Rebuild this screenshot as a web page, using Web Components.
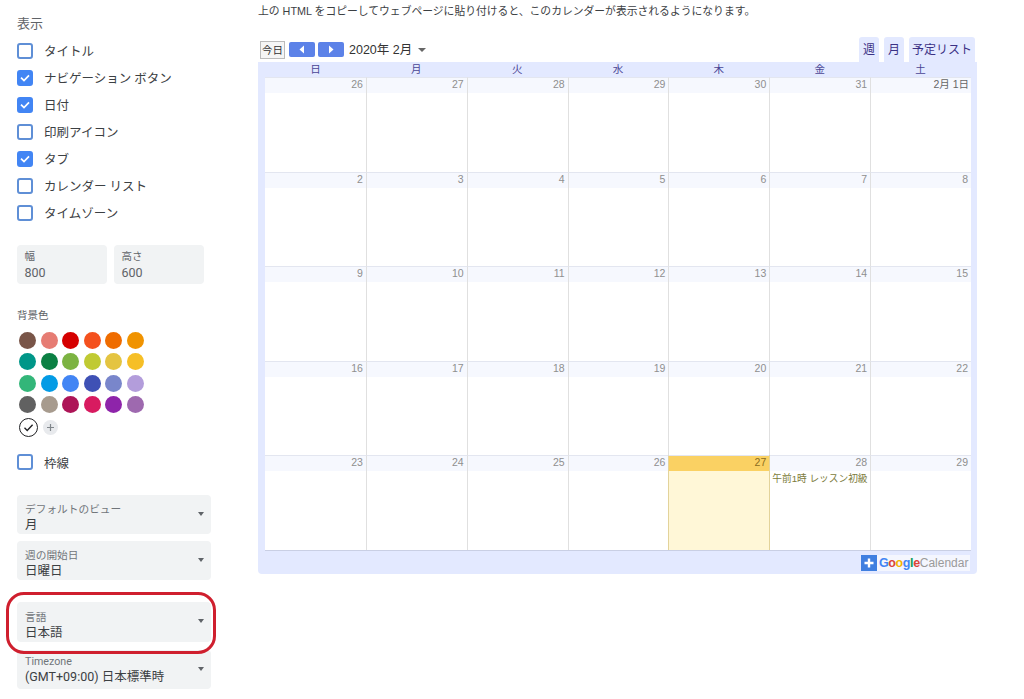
<!DOCTYPE html>
<html lang="ja">
<head>
<meta charset="utf-8">
<title>カレンダーの埋め込み</title>
<style>
  html, body { margin: 0; height: 699px; overflow: hidden; background: #fff; }
  body { font-family: Roboto, "Noto Sans CJK JP", sans-serif; color: #3c4043; }
</style>
</head>
<body>
<embed-page>
  <embed-sidebar slot="side">
    <check-row>タイトル</check-row>
    <check-row checked>ナビゲーション ボタン</check-row>
    <check-row checked>日付</check-row>
    <check-row>印刷アイコン</check-row>
    <check-row checked>タブ</check-row>
    <check-row>カレンダー リスト</check-row>
    <check-row>タイムゾーン</check-row>
    <size-field slot="sizes" label="幅" value="800" style="width:90px"></size-field>
    <size-field slot="sizes" label="高さ" value="600" style="width:90px"></size-field>
    <color-swatches slot="colors"></color-swatches>
    <check-row slot="border">枠線</check-row>
    <select-field slot="selects" label="デフォルトのビュー" value="月"></select-field>
    <select-field slot="selects" label="週の開始日" value="日曜日"></select-field>
    <select-field slot="selects" label="言語" value="日本語" ringed style="margin-top:15px"></select-field>
    <select-field slot="selects" label="Timezone" value="(GMT+09:00) 日本標準時" style="margin-top:1px;padding-top:5px"></select-field>
  </embed-sidebar>
  <cal-preview slot="main"></cal-preview>
</embed-page>

<script>
customElements.define('embed-page', class extends HTMLElement {
  constructor() {
    super();
    this.attachShadow({ mode: 'open' });
    this.shadowRoot.innerHTML = `
      <style>
        :host { display: flex; height: 699px; overflow: hidden; }
        .side { width: 258px; flex: none; }
        .main { flex: none; width: 719px; }
      </style>
      <div class="side"><slot name="side"></slot></div>
      <div class="main"><slot name="main"></slot></div>
    `;
  }
});

customElements.define('embed-sidebar', class extends HTMLElement {
  constructor() {
    super();
    this.attachShadow({ mode: 'open' });
    this.shadowRoot.innerHTML = `
      <style>
        :host { display: block; padding: 15px 0 0 17px; }
        h2 { margin: 0 0 4px; font: 400 13px/18px Roboto, "Noto Sans CJK JP", sans-serif; color: #5f6368; }
        .sizes { display: flex; gap: 7px; margin-top: 19px; }
        .colors { margin-top: 24px; }
        .colors p { margin: 0 0 7.5px; font-size: 10.5px; line-height: 16px; color: #5f6368; }
        .border { margin-top: 12px; }
        .selects { margin-top: 19px; width: 194px; display: flex; flex-direction: column; gap: 7px; }
      </style>
      <h2>表示</h2>
      <slot></slot>
      <div class="sizes"><slot name="sizes"></slot></div>
      <div class="colors"><p>背景色</p><slot name="colors"></slot></div>
      <div class="border"><slot name="border"></slot></div>
      <div class="selects"><slot name="selects"></slot></div>
    `;
  }
});

customElements.define('check-row', class extends HTMLElement {
  constructor() {
    super();
    this.attachShadow({ mode: 'open' });
    const on = this.hasAttribute('checked');
    this.shadowRoot.innerHTML = `
      <style>
        :host { display: flex; align-items: center; height: 27px; font-size: 12.5px; color: #3c4043; }
        .box { width: 16px; height: 16px; box-sizing: border-box; border: 2px solid #5f8fd6; border-radius: 3px; margin-right: 11px; display: flex; align-items: center; justify-content: center; }
        .box.on { background: #4285f4; border-color: #4285f4; }
      </style>
      <span class="box ${on ? 'on' : ''}">${on ? '<svg width="12" height="12" viewBox="0 0 12 12"><path d="M2 5.6 5 8.6 10 3.4" fill="none" stroke="#fff" stroke-width="1.7"/></svg>' : ''}</span>
      <slot></slot>
    `;
  }
});

customElements.define('size-field', class extends HTMLElement {
  constructor() {
    super();
    this.attachShadow({ mode: 'open' });
    this.shadowRoot.innerHTML = `
      <style>
        :host { display: block; height: 39px; box-sizing: border-box; padding: 5px 7.5px 0; background: #f1f3f4; border-radius: 4px; }
        .l { font-size: 10.5px; line-height: 14px; color: #5f6368; }
        .v { font-size: 12.5px; line-height: 18px; color: #5f6368; }
      </style>
      <div class="l">${this.getAttribute('label')}</div>
      <div class="v">${this.getAttribute('value')}</div>
    `;
  }
});

customElements.define('select-field', class extends HTMLElement {
  constructor() {
    super();
    this.attachShadow({ mode: 'open' });
    this.shadowRoot.innerHTML = `
      <style>
        :host { display: block; position: relative; height: 39px; box-sizing: border-box; padding: 8px 8px 0; background: #f1f3f4; border-radius: 4px; }
        :host([ringed]) { z-index: 1; height: 40px; padding-top: 9px; }
        .l { font-size: 10.7px; line-height: 14px; color: #70757a; }
        .v { font-size: 12.5px; line-height: 15px; color: #3c4043; white-space: nowrap; }
        .arrow { position: absolute; right: 7px; top: 17px; width: 0; height: 0; border: 3.5px solid transparent; border-top: 4px solid #5f6368; border-bottom: 0; }
        .ring { position: absolute; left: -11px; right: -5px; top: -10px; bottom: -12px; border: 3px solid #cf1f2e; border-radius: 18px; pointer-events: none; }
      </style>
      <div class="l">${this.getAttribute('label')}</div>
      <div class="v">${this.getAttribute('value')}</div>
      <span class="arrow"></span>
      ${this.hasAttribute('ringed') ? '<span class="ring"></span>' : ''}
    `;
  }
});

customElements.define('color-swatches', class extends HTMLElement {
  constructor() {
    super();
    this.attachShadow({ mode: 'open' });
    const colors = [
      '#795548', '#e67c73', '#d50000', '#f4511e', '#ef6c00', '#f09300',
      '#009688', '#0b8043', '#7cb342', '#c0ca33', '#e4c441', '#f6bf26',
      '#33b679', '#039be5', '#4285f4', '#3f51b5', '#7986cb', '#b39ddb',
      '#616161', '#a79b8e', '#ad1457', '#d81b60', '#8e24aa', '#9e69af'
    ];
    this.shadowRoot.innerHTML = `
      <style>
        :host { display: block; padding-left: 2px; }
        .grid { display: grid; grid-template-columns: repeat(6, 17px); gap: 4.5px; }
        .dot { width: 17px; height: 17px; border-radius: 50%; }
        .last { display: flex; align-items: center; gap: 5px; margin-top: 4.5px; }
        .check { width: 19px; height: 19px; box-sizing: border-box; border: 1.5px solid #202124; border-radius: 50%; display: flex; align-items: center; justify-content: center; }
        .plus { width: 15px; height: 15px; border-radius: 50%; background: #e8eaed; display: flex; align-items: center; justify-content: center; }
      </style>
      <div class="grid">${colors.map(c => `<span class="dot" style="background:${c}"></span>`).join('')}</div>
      <div class="last">
        <span class="check"><svg width="11" height="11" viewBox="0 0 11 11"><path d="M1.5 5.8 4.2 8.4 9.6 2.8" fill="none" stroke="#202124" stroke-width="1.4"/></svg></span>
        <span class="plus"><svg width="9" height="9" viewBox="0 0 9 9"><path d="M4.5 1v7M1 4.5h7" stroke="#80868b" stroke-width="1.2"/></svg></span>
      </div>
    `;
  }
});

customElements.define('cal-day', class extends HTMLElement {
  constructor() {
    super();
    this.attachShadow({ mode: 'open' });
    const today = this.hasAttribute('today');
    const first = this.getAttribute('n') === '2月 1日';
    this.shadowRoot.innerHTML = `
      <style>
        :host { display: block; box-sizing: border-box; border-left: 1px solid #e0e0e0; border-top: 1px solid #e3e6f0; background: ${today ? '#fff7d7' : '#fff'}; overflow: hidden; }
        :host([today]) { border-left-color: #e3d39a; box-shadow: 1px 0 0 #e3d39a; position: relative; }
        :host([lead]) { border-left: 0; }
        .num { height: 15px; padding-right: ${first ? 2 : 3}px; text-align: right; font-size: 10.5px; line-height: 13px; color: ${today ? '#8a6d1f' : first ? '#666' : '#8f8f8f'}; background: ${today ? '#fad163' : '#f6f8fe'}; }
        .ev { margin: 1px 0 0 2px; font-size: 9.7px; line-height: 14px; color: #7c7c3c; white-space: nowrap; }
      </style>
      <div class="num">${this.getAttribute('n')}</div>
      ${this.getAttribute('event') ? `<div class="ev">${this.getAttribute('event')}</div>` : ''}
    `;
  }
});

customElements.define('cal-preview', class extends HTMLElement {
  constructor() {
    super();
    this.attachShadow({ mode: 'open' });
    const days = ['26','27','28','29','30','31','2月 1日'];
    for (let i = 2; i <= 29; i++) days.push(String(i));
    const cells = days.map((d, i) => {
      let extra = '';
      if (d === '27' && i > 10) extra += ' today';
      if (d === '28' && i > 10) extra += ' event="午前1時 レッスン初級"';
      if (i % 7 === 0) extra += ' lead';
      return `<cal-day n="${d}"${extra}></cal-day>`;
    }).join('');
    const heads = ['日','月','火','水','木','金','土'].map(d => `<span>${d}</span>`).join('');
    this.shadowRoot.innerHTML = `
      <style>
        :host { display: block; font-family: "Liberation Sans", "Noto Sans CJK JP", sans-serif; }
        .note { margin: 0; height: 37px; padding-top: 4px; box-sizing: border-box; font-size: 10.8px; line-height: 15px; color: #3c4043; white-space: nowrap; }
        .bar { display: flex; align-items: center; height: 25px; padding: 0 2px; }
        .today { width: 25px; height: 18px; box-sizing: border-box; border: 1px solid #bbb; background: #f5f5f5; font-size: 10.5px; line-height: 16px; text-align: center; color: #333; }
        .nav { width: 26px; height: 15px; background: #5c82e8; border-radius: 2px; margin-left: 3.5px; display: flex; align-items: center; justify-content: center; }
        .title { margin: 0 0 2px 5px; font-size: 12.5px; color: #333; }
        .drop { margin-left: 6px; width: 0; height: 0; border: 4px solid transparent; border-top: 4px solid #666; border-bottom: 0; }
        .tabs { margin-left: auto; display: flex; gap: 5px; align-self: stretch; }
        .tabs span { background: #e3e9ff; border-radius: 3px 3px 0 0; padding: 0 3px; font-size: 12px; line-height: 27px; color: #3b3185; min-width: 14px; text-align: center; }
        .box { background: #e3e9ff; border-radius: 0 0 4px 4px; padding: 0 6px 0 7px; height: 512px; box-sizing: border-box; }
        .heads { display: grid; grid-template-columns: repeat(7, 1fr); height: 15px; font-size: 10.5px; line-height: 15px; text-align: center; color: #4a4595; }
        .grid { display: grid; grid-template-columns: repeat(7, 1fr); grid-template-rows: repeat(5, 94.6px); border-bottom: 1px solid #c9cfe4; }
        .foot { display: flex; justify-content: flex-end; padding: 4px 1px 0 0; }
        .logo { display: flex; align-items: center; height: 16px; width: 109px; background: #f4f6fe; }
        .logo svg { margin-right: 2px; flex: none; }
        .g { font-weight: 700; font-size: 12.5px; letter-spacing: -.4px; }
        .c { font-size: 12px; color: #9a9a9a; }
      </style>
      <p class="note">上の HTML をコピーしてウェブページに貼り付けると、このカレンダーが表示されるようになります。</p>
      <div class="bar">
        <span class="today">今日</span>
        <span class="nav"><svg width="8" height="9" viewBox="0 0 8 9"><path d="M6 0.5v8L1.5 4.5z" fill="#fff"/></svg></span>
        <span class="nav"><svg width="8" height="9" viewBox="0 0 8 9"><path d="M2 0.5v8L6.5 4.5z" fill="#fff"/></svg></span>
        <span class="title">2020年 2月</span>
        <span class="drop"></span>
        <div class="tabs"><span>週</span><span>月</span><span>予定リスト</span></div>
      </div>
      <div class="box">
        <div class="heads">${heads}</div>
        <div class="grid">${cells}</div>
        <div class="foot">
          <div class="logo">
            <svg width="16" height="16" viewBox="0 0 16 16"><rect width="16" height="16" fill="#3f7fe0"/><path d="M8 3.5v9M3.5 8h9" stroke="#fff" stroke-width="2.4"/></svg>
            <span class="g"><span style="color:#4285f4">G</span><span style="color:#db4437">o</span><span style="color:#f4b400">o</span><span style="color:#4285f4">g</span><span style="color:#0f9d58">l</span><span style="color:#db4437">e</span></span>
            <span class="c">Calendar</span>
          </div>
        </div>
      </div>
    `;
  }
});
</script>
</body>
</html>
